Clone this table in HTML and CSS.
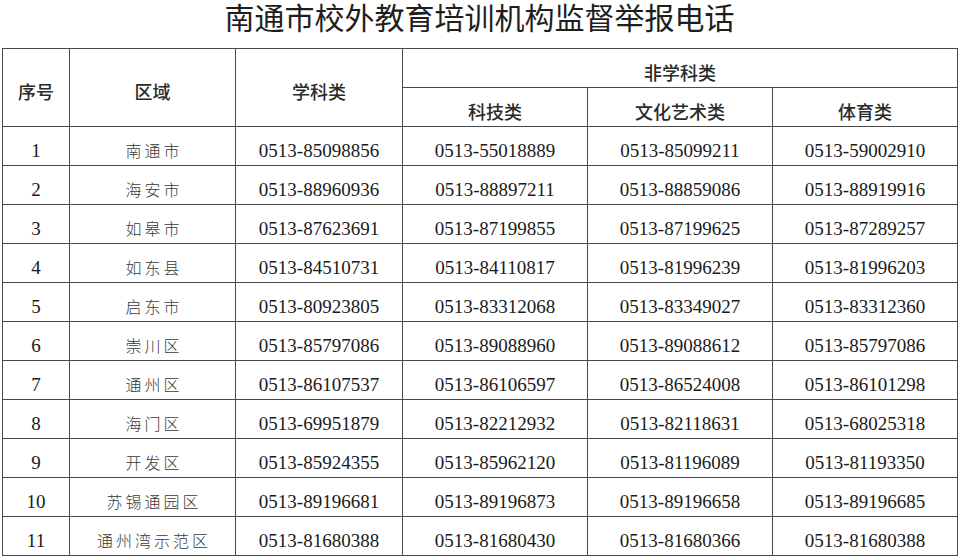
FILE: index.html
```html
<!DOCTYPE html>
<html lang="zh-CN">
<head>
<meta charset="utf-8">
<title>南通市校外教育培训机构监督举报电话</title>
<link rel="stylesheet" href="styles.css">
</head>
<body>
<div class="page">
  <h1 class="title">南通市校外教育培训机构监督举报电话</h1>
  <table class="phones">
    <colgroup>
      <col class="c-no"><col class="c-area"><col class="c-subj"><col class="c-other"><col class="c-other"><col class="c-other">
    </colgroup>
    <thead>
      <tr>
        <th rowspan="2">序号</th>
        <th rowspan="2">区域</th>
        <th rowspan="2">学科类</th>
        <th colspan="3">非学科类</th>
      </tr>
      <tr>
        <th>科技类</th>
        <th>文化艺术类</th>
        <th>体育类</th>
      </tr>
    </thead>
    <tbody>
      <tr><td class="num">1</td><td class="area">南通市</td><td class="tel">0513-85098856</td><td class="tel">0513-55018889</td><td class="tel">0513-85099211</td><td class="tel">0513-59002910</td></tr>
      <tr><td class="num">2</td><td class="area">海安市</td><td class="tel">0513-88960936</td><td class="tel">0513-88897211</td><td class="tel">0513-88859086</td><td class="tel">0513-88919916</td></tr>
      <tr><td class="num">3</td><td class="area">如皋市</td><td class="tel">0513-87623691</td><td class="tel">0513-87199855</td><td class="tel">0513-87199625</td><td class="tel">0513-87289257</td></tr>
      <tr><td class="num">4</td><td class="area">如东县</td><td class="tel">0513-84510731</td><td class="tel">0513-84110817</td><td class="tel">0513-81996239</td><td class="tel">0513-81996203</td></tr>
      <tr><td class="num">5</td><td class="area">启东市</td><td class="tel">0513-80923805</td><td class="tel">0513-83312068</td><td class="tel">0513-83349027</td><td class="tel">0513-83312360</td></tr>
      <tr><td class="num">6</td><td class="area">崇川区</td><td class="tel">0513-85797086</td><td class="tel">0513-89088960</td><td class="tel">0513-89088612</td><td class="tel">0513-85797086</td></tr>
      <tr><td class="num">7</td><td class="area">通州区</td><td class="tel">0513-86107537</td><td class="tel">0513-86106597</td><td class="tel">0513-86524008</td><td class="tel">0513-86101298</td></tr>
      <tr><td class="num">8</td><td class="area">海门区</td><td class="tel">0513-69951879</td><td class="tel">0513-82212932</td><td class="tel">0513-82118631</td><td class="tel">0513-68025318</td></tr>
      <tr><td class="num">9</td><td class="area">开发区</td><td class="tel">0513-85924355</td><td class="tel">0513-85962120</td><td class="tel">0513-81196089</td><td class="tel">0513-81193350</td></tr>
      <tr><td class="num">10</td><td class="area">苏锡通园区</td><td class="tel">0513-89196681</td><td class="tel">0513-89196873</td><td class="tel">0513-89196658</td><td class="tel">0513-89196685</td></tr>
      <tr><td class="num">11</td><td class="area">通州湾示范区</td><td class="tel">0513-81680388</td><td class="tel">0513-81680430</td><td class="tel">0513-81680366</td><td class="tel">0513-81680388</td></tr>
    </tbody>
  </table>
</div>
</body>
</html>
```

FILE: styles.css
```css
html, body {
  margin: 0;
  padding: 0;
  background: #ffffff;
}

.page {
  width: 960px;
  height: 558px;
  overflow: hidden;
  padding-left: 2px;
  box-sizing: border-box;
}

.title {
  margin: 0;
  height: 48px;
  line-height: 38px;
  text-align: center;
  font-family: "Liberation Sans", "Noto Sans CJK SC", sans-serif;
  font-weight: 400;
  font-size: 30px;
  color: #1e1e1e;
  width: 955px;
}

.phones {
  border-collapse: collapse;
  table-layout: fixed;
  width: 955px;
}

.c-no { width: 67px; }
.c-area { width: 166px; }
.c-subj { width: 167px; }
.c-other { width: 185px; }

.phones tr {
  height: 39px;
}

.phones th,
.phones td {
  border: 1px solid #4a4a4a;
  padding: 10px 0 0;
  text-align: center;
  vertical-align: middle;
  white-space: nowrap;
}

.phones th {
  font-family: "Noto Sans CJK SC", "Noto Sans", sans-serif;
  font-weight: 500;
  font-size: 18px;
  line-height: 24px;
  padding-top: 7px;
  color: #2a2a2a;
}

.phones td.num,
.phones td.tel {
  font-family: "Liberation Serif", "Times New Roman", serif;
  font-size: 19px;
  line-height: 22px;
  color: #1a1a1a;
}

.phones td.area {
  font-family: "Noto Sans CJK SC", sans-serif;
  font-weight: 300;
  font-size: 16px;
  line-height: 22px;
  letter-spacing: 3px;
  padding-top: 7px;
  padding-left: 3px;
  color: #3a3a3a;
}
```
